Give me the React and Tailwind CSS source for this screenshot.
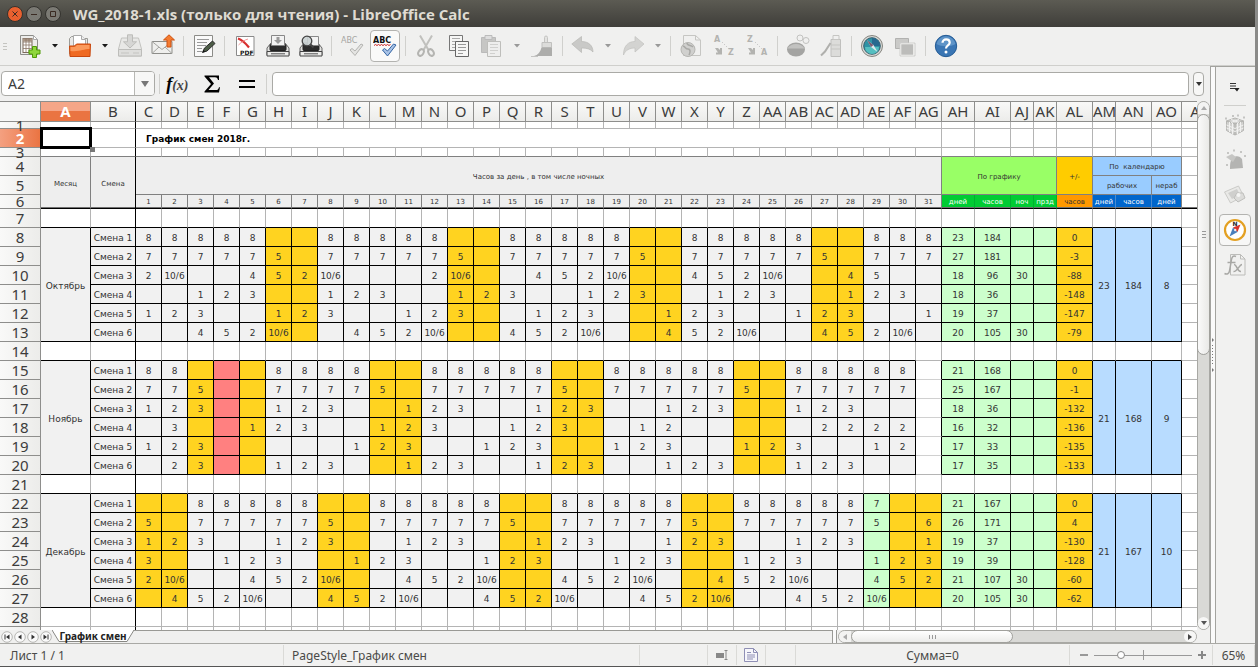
import React from 'react';
import clsx from 'clsx';

const LETTERS = ['A', 'B', 'C', 'D', 'E', 'F', 'G', 'H', 'I', 'J', 'K', 'L', 'M', 'N', 'O', 'P', 'Q', 'R', 'S', 'T', 'U', 'V', 'W', 'X', 'Y', 'Z'];
const COLUMNS = [...LETTERS, ...LETTERS.slice(0, 16).map((l) => `A${l}`)];
const DAYS = Array.from({ length: 31 }, (_, i) => i + 1);

// one token per day, "." is an empty cell
const MONTHS = [
  {
    name: 'Октябрь',
    firstRow: 8,
    days: 31,
    weekend: [6, 7, 13, 14, 20, 21, 27, 28],
    rows: [
      '8 8 8 8 8 . . 8 8 8 8 8 . . 8 8 8 8 8 . . 8 8 8 8 8 . . 8 8 8',
      '7 7 7 7 7 5 . 7 7 7 7 7 5 . 7 7 7 7 7 5 . 7 7 7 7 7 5 . 7 7 7',
      '2 10/6 . . 4 5 2 10/6 . . . 2 10/6 . . 4 5 2 10/6 . . 4 5 2 10/6 . . 4 5 . .',
      '. . 1 2 3 . . 1 2 3 . . 1 2 3 . . 1 2 3 . . 1 2 3 . . 1 2 3 .',
      '1 2 3 . . 1 2 3 . . 1 2 3 . . 1 2 3 . . 1 2 3 . . 1 2 3 . . 1',
      '. . 4 5 2 10/6 . . 4 5 2 10/6 . . 4 5 2 10/6 . . 4 5 2 10/6 . . 4 5 2 10/6 .',
    ],
    stats: [
      [23, 184, '', '', 0],
      [27, 181, '', '', -3],
      [18, 96, 30, '', -88],
      [18, 36, '', '', -148],
      [19, 37, '', '', -147],
      [20, 105, 30, '', -79],
    ],
    totals: [23, 184, 8],
  },
  {
    name: 'Ноябрь',
    firstRow: 15,
    days: 30,
    weekend: [3, 5, 10, 11, 17, 18, 24, 25],
    holiday: 4,
    rows: [
      '8 8 . . . 8 8 8 8 . . 8 8 8 8 8 . . 8 8 8 8 8 . . 8 8 8 8 8',
      '7 7 5 . . 7 7 7 7 5 . 7 7 7 7 7 5 . 7 7 7 7 7 5 . 7 7 7 7 7',
      '1 2 3 . . 1 2 3 . . 1 2 3 . . 1 2 3 . . 1 2 3 . . 1 2 3 . .',
      '. 3 . . 1 2 3 . . 1 2 3 . . 1 2 3 . . 1 2 . . . . . 2 2 2 2',
      '1 2 3 . . . . . 1 2 3 . . 1 2 3 . . 1 2 3 . . 1 2 3 . . 1 2',
      '. 2 3 . . 1 2 3 . . 1 2 3 . . 1 2 3 . . 1 2 3 . . 1 2 3 . .',
    ],
    stats: [
      [21, 168, '', '', 0],
      [25, 167, '', '', -1],
      [18, 36, '', '', -132],
      [16, 32, '', '', -136],
      [17, 33, '', '', -135],
      [17, 35, '', '', -133],
    ],
    totals: [21, 168, 9],
  },
  {
    name: 'Декабрь',
    firstRow: 22,
    days: 31,
    weekend: [1, 2, 8, 9, 15, 16, 22, 23, 30, 31],
    shortDay: 29,
    rows: [
      '. . 8 8 8 8 8 . . 8 8 8 8 8 . . 8 8 8 8 8 . . 8 8 8 8 8 7 . .',
      '5 . 7 7 7 7 7 5 . 7 7 7 7 7 5 . 7 7 7 7 7 5 . 7 7 7 7 7 5 . 6',
      '1 2 3 . . 1 2 3 . . 1 2 3 . . 1 2 3 . . 1 2 3 . . 1 2 3 . . 1',
      '3 . . 1 2 3 . . 1 2 3 . . 1 2 3 . . 1 2 3 . . 1 2 3 . . 1 2 3',
      '2 10/6 . . 4 5 2 10/6 . . 4 5 2 10/6 . . 4 5 2 10/6 . . 4 5 2 10/6 . . 4 5 2',
      '. 4 5 2 10/6 . . 4 5 2 10/6 . . 4 5 2 10/6 . . 4 5 2 10/6 . . 4 5 2 10/6 . .',
    ],
    stats: [
      [21, 167, '', '', 0],
      [26, 171, '', '', 4],
      [19, 37, '', '', -130],
      [19, 39, '', '', -128],
      [21, 107, 30, '', -60],
      [20, 105, 30, '', -62],
    ],
    totals: [21, 167, 10],
  },
];

const RowHead = ({ n, h = 'h-[19px]', leading = 'leading-[18px]', active }) => (
  <th
    scope="row"
    className={clsx(
      'border-r border-b border-[#8e8e8c] p-0 text-center text-[15px]',
      h,
      leading,
      active ? 'bg-linear-to-r from-[#f4a080] to-[#ea7442] font-bold text-white' : 'bg-linear-to-r from-[#f9f9f8] to-[#ececea] font-normal text-[#3c3c3c]'
    )}
  >
    {n}
  </th>
);

const Blank = ({ dark, right, black, h }) => (
  <td
    className={clsx(
      'border-r border-b bg-white p-0',
      h,
      right ? 'border-r-black' : 'border-r-[#b4b4b4]',
      black ? 'border-b-black' : dark ? 'border-b-[#808080]' : 'border-b-[#b4b4b4]'
    )}
  />
);

// plain row with nothing but grid lines, blackUnder tells which columns get a frame below
const EmptyRow = ({ n, h, leading, dark, blackUnder = () => false }) => (
  <tr>
    <RowHead n={n} h={h} leading={leading} />
    {COLUMNS.map((c) => (
      <Blank key={c} dark={dark && c !== 'AP'} right={c === 'B'} black={blackUnder(c)} />
    ))}
  </tr>
);

const HeadCell = ({ className, children, ...rest }) => (
  <td className={clsx('border-r border-b border-[#808080] px-0 pb-0 text-center text-[7px] leading-3', className)} {...rest}>
    {children}
  </td>
);

const dayColor = (month, day) => {
  if (month.weekend.includes(day)) return 'bg-[#ffd320]';
  if (month.holiday === day) return 'bg-[#ff8080]';
  if (month.shortDay === day) return 'bg-[#ccffcc]';
  return 'bg-[#f1f1f1]';
};

const cell = 'border-r border-b border-black px-0 pt-0.5 pb-0 text-center';

const MonthBlock = ({ month }) =>
  month.rows.map((row, i) => (
    <tr key={i}>
      <RowHead n={month.firstRow + i} />
      {i === 0 && (
        <td rowSpan={6} className={clsx(cell, 'bg-[#f1f1f1]')}>
          {month.name}
        </td>
      )}
      <td className={clsx(cell, 'bg-[#f1f1f1] whitespace-nowrap')}>Смена {i + 1}</td>
      {row.split(' ').map((v, d) => (
        <td key={d} className={clsx(cell, dayColor(month, d + 1))}>
          {v === '.' ? '' : v}
        </td>
      ))}
      {month.days === 30 && (
        <td className={clsx('border-r border-b border-r-black bg-white p-0', i === 5 ? 'border-b-[#b4b4b4]' : 'border-b-[#d0d0d0]')} />
      )}
      {month.stats[i].map((v, s) => (
        <td key={s} className={clsx(cell, s === 4 ? 'bg-[#ffd320]' : 'bg-[#ccffcc]')}>
          {v}
        </td>
      ))}
      {i === 0 &&
        month.totals.map((v, t) => (
          <td key={t} rowSpan={6} className={clsx(cell, 'bg-[#b8dcff]')}>
            {v}
          </td>
        ))}
      <Blank />
    </tr>
  ));

const lastHead = 'border-b-black shadow-[inset_0_-1px_0_#707070]';

const Sheet = () => (
  <table className="w-[1218px] table-fixed border-separate border-spacing-0 font-['DejaVu_Sans',sans-serif] text-[9px] leading-3 text-[#333]">
    <colgroup>
      <col className="w-[41px]" />
      <col className="w-[50px]" />
      <col className="w-[45px]" />
      {DAYS.map((d) => (
        <col key={d} className="w-[26px]" />
      ))}
      <col className="w-[33px]" />
      <col className="w-[36px]" />
      <col className="w-[23px]" />
      <col className="w-[23px]" />
      <col className="w-[36px]" />
      <col className="w-[23px]" />
      <col className="w-[36px]" />
      <col className="w-[30px]" />
      <col className="w-[36px]" />
    </colgroup>
    <thead className="font-['Noto_Sans','Open_Sans',sans-serif]">
      <tr>
        <th className="h-[21px] border-t border-r border-b border-[#8e8e8c] bg-[#f6f6f5] p-0" />
        {COLUMNS.map((c) => (
          <th
            key={c}
            scope="col"
            className={clsx(
              'overflow-hidden border-t border-r border-b border-[#8e8e8c] p-0 text-center text-[15px] leading-[19px] whitespace-nowrap',
              c === 'A' ? 'bg-linear-to-b from-[#f5a688] from-50% to-[#ea7442] to-50% font-bold text-white' : 'bg-linear-to-b from-[#f9f9f8] to-[#ececea] font-normal text-[#3c3c3c]',
              c === 'B' && 'border-r-black'
            )}
          >
            {c}
          </th>
        ))}
      </tr>
    </thead>
    <tbody className="[&_th]:font-['Noto_Sans','Open_Sans',sans-serif]">
      <EmptyRow n={1} h="h-[7px]" leading="leading-[6px]" />
      <tr>
        <RowHead n={2} active />
        <td className="relative border-r border-b border-[#b4b4b4] p-0">
          <div className="absolute -top-[2px] -right-[2px] -bottom-[2px] -left-px border-[3px] border-black" />
          <div className="absolute -right-[5px] -bottom-[5px] size-[5px] bg-[#777]" />
        </td>
        <Blank right />
        <td colSpan={31} className="border-r border-b border-[#b4b4b4] pt-0.5 pr-0 pb-0 pl-2.5 font-bold text-black">
          График смен 2018г.
        </td>
        {COLUMNS.slice(33).map((c) => (
          <Blank key={c} />
        ))}
      </tr>
      <EmptyRow n={3} h="h-[9px]" leading="leading-[8px]" dark />
      <tr>
        <RowHead n={4} />
        <HeadCell rowSpan={3} className={clsx('bg-[#eee] pt-0.5', lastHead)}>Месяц</HeadCell>
        <HeadCell rowSpan={3} className={clsx('border-r-black bg-[#eee] pt-0.5', lastHead)}>Смена</HeadCell>
        <HeadCell colSpan={31} rowSpan={2} className="bg-[#eee] pt-0.5">Часов за день , в том числе ночных</HeadCell>
        <HeadCell colSpan={4} rowSpan={2} className="bg-[#99ff66] pt-0.5">По графику</HeadCell>
        <HeadCell rowSpan={2} className="bg-[#ffcc00] pt-0.5">+/-</HeadCell>
        <HeadCell colSpan={3} className="bg-[#99ccff] pt-0.5 whitespace-pre">{'По  календарю'}</HeadCell>
        <Blank />
      </tr>
      <tr>
        <RowHead n={5} />
        <HeadCell colSpan={2} className="bg-[#99ccff] pt-0.5">рабочих</HeadCell>
        <HeadCell className="bg-[#99ccff] pt-0.5">нераб</HeadCell>
        <Blank />
      </tr>
      <tr>
        <RowHead n={6} h="h-[14px]" leading="leading-[13px]" />
        {DAYS.map((d) => (
          <HeadCell key={d} className={clsx('bg-[#eee] pt-0', lastHead)}>
            {d}
          </HeadCell>
        ))}
        {['дней', 'часов', 'ноч', 'прзд'].map((t) => (
          <HeadCell key={t} className={clsx('border-r-[#00b030] bg-[#00cc33] pt-0 text-white', lastHead)}>{t}</HeadCell>
        ))}
        <HeadCell className={clsx('bg-[#ff9900] pt-0', lastHead)}>часов</HeadCell>
        <HeadCell className={clsx('border-r-[#4a8bd0] bg-[#0066cc] pt-0 text-white', lastHead)}>дней</HeadCell>
        <HeadCell className={clsx('border-r-[#4a8bd0] bg-[#0066cc] pt-0 text-white', lastHead)}>часов</HeadCell>
        <HeadCell className={clsx('bg-[#0066cc] pt-0 text-white', lastHead)}>дней</HeadCell>
        <td className={clsx('border-r border-b border-r-[#b4b4b4] bg-white p-0', lastHead)} />
      </tr>
      <EmptyRow n={7} blackUnder={(c) => c !== 'AP'} />
      <MonthBlock month={MONTHS[0]} />
      <EmptyRow n={14} blackUnder={(c) => c !== 'AP' && c !== 'AG'} />
      <MonthBlock month={MONTHS[1]} />
      <EmptyRow n={21} blackUnder={(c) => c !== 'AP'} />
      <MonthBlock month={MONTHS[2]} />
      <EmptyRow n={28} />
      <EmptyRow n="" />
    </tbody>
  </table>
);

const Icon = ({ children, size = 'size-6' }) => (
  <svg viewBox="0 0 24 24" className={clsx('shrink-0', size)} fill="none" aria-hidden="true">
    {children}
  </svg>
);

const ToolButton = ({ label, pressed, children }) => (
  <button
    type="button"
    aria-label={label}
    className={clsx('flex w-[33px] shrink-0 items-center justify-center', pressed && 'h-8')}
  >
    {pressed ? (
      <span className="flex h-8 w-[30px] items-center justify-center rounded border border-[#b3b3b0] bg-[#fafaf9]">{children}</span>
    ) : (
      children
    )}
  </button>
);

const Caret = ({ label, off }) => (
  <button type="button" aria-label={label} className="flex w-[17px] shrink-0 justify-center">
    <svg viewBox="0 0 6 4" className={clsx('h-1 w-1.5', off ? 'fill-[#999]' : 'fill-[#1a1a1a]')}>
      <path d="M0 0h6L3 3.6z" />
    </svg>
  </button>
);

const Sep = () => (
  <span className="flex w-2 shrink-0 justify-center">
    <span className="h-5 w-px bg-[#d0d0cd]" />
  </span>
);

const Printer = () => (
  <>
    <path d="M1 14 5 9h14l4 5v7H1z" fill="#e2e2e0" stroke="#666" />
    <rect x="4" y="10.500" width="16" height="6" rx="1" fill="#2c2c2c" stroke="#222" />
    <path d="M1 17.500h22V22H1z" fill="#ececea" stroke="#444" />
    <path d="M5 19.800h14" stroke="#555" />
  </>
);

const Toolbar = () => (
  <div className="flex h-[39px] shrink-0 items-center border-b border-[#cfcfcc] bg-[#f0f0ef]" role="toolbar" aria-label="Стандартная">
    <span className="flex w-[13px] shrink-0 flex-col items-start gap-[2px] pl-[3px]">
      <span className="h-px w-1 bg-[#c4c4c0]" />
      <span className="h-px w-1 bg-[#c4c4c0]" />
      <span className="h-px w-1 bg-[#c4c4c0]" />
    </span>
    <ToolButton label="Создать">
      <Icon>
        <path d="M2.500 1.500h13l4 4v15h-17z" fill="#ededeb" stroke="#8c8c88" />
        <path d="M15.500 1.500v4h4z" fill="#fff" stroke="#aaa" />
        <rect x="5" y="4.500" width="9" height="14" fill="#fff" stroke="#7b6a5c" />
        <path d="M5 4.500h9v3H5z" fill="#a89484" />
        <path d="M5 8h9M5 11h9M5 14.500h9M8 4.500v14M11 4.500v14" stroke="#8b7768" strokeWidth=".8" />
        <path d="M14.500 12.500h4v3.500h3.500v4h-3.500v3.500h-4V20H11v-4h3.500z" fill="#8fd63c" stroke="#4e9a06" />
      </Icon>
    </ToolButton>
    <Caret label="Шаблоны" />
    <ToolButton label="Открыть">
      <Icon>
        <path d="M1.500 20V4.500l2-2h5l1 2h10V20z" fill="#e9e9e7" stroke="#9a9a96" />
        <path d="M5.500 1.500h8l4 4V12h-12z" fill="#fff" stroke="#aaa" />
        <path d="M13.500 1.500v4h4" fill="#eee" stroke="#aaa" />
        <path d="M1.500 12h5l2-2h14l-.5 12.500h-20z" fill="#ef6a22" stroke="#c8480f" />
        <path d="M2.500 13h4.500l2-2h12.500v4c-6 0-10 3-19 2z" fill="#fb9a5c" />
      </Icon>
    </ToolButton>
    <Caret label="Последние файлы" />
    <ToolButton label="Сохранить">
      <Icon>
        <path d="m3.500 4-3 11v7h23v-7l-3-11z" fill="#e8e8e6" stroke="#c2c2bf" />
        <path d="M.5 15.500h23V22H.5z" fill="#dededc" stroke="#bdbdba" />
        <path d="M9.500.8h5v7h4L12 14 5.500 7.800h4z" fill="#d6d6d4" stroke="#bcbcb9" />
        <path d="M3 19h8M15 19h6" stroke="#c4c4c1" />
      </Icon>
    </ToolButton>
    <ToolButton label="Отправить документ">
      <Icon>
        <path d="M1 7.500h20v12H1z" fill="#efefed" stroke="#8d8d89" />
        <path d="m1 7.500 10 8 10-8M1 19.500l7-6.500M21 19.500 14 13" stroke="#a5a5a1" />
        <path d="M16 13V6h-3.500L18 .8 23.500 6H20v7z" fill="#f47b30" stroke="#ce5312" />
      </Icon>
    </ToolButton>
    <Sep />
    <ToolButton label="Правка">
      <Icon>
        <path d="M2.500 1.500h18v21h-18z" fill="#fafafa" stroke="#8c8c88" />
        <path d="M5 5.500h12M5 8.500h10M5 11.500h9M5 14.500h5M5 17.500h5" stroke="#999" />
        <path d="m10.500 18.500 2-4.500 8-7 2.500 2.500-8 7.500z" fill="#4c5c46" stroke="#2b2b2b" />
        <path d="m10.500 18.500 1-2.500 1.800 1.600z" fill="#111" />
      </Icon>
    </ToolButton>
    <Sep />
    <ToolButton label="Экспорт в PDF">
      <Icon>
        <path d="M3.500 2.500h17.500v19H3.500z" fill="#fff" stroke="#8a8a8a" />
        <path d="M5 4.500c3 1 7 4 11 9" stroke="#d83030" strokeWidth="2.200" />
        <path d="M5.500 11c3-3 6-5 9.500-6" stroke="#ef8080" strokeWidth=".8" />
        <text x="7" y="20.500" fontSize="6" fontWeight="bold" fill="#111" fontFamily="DejaVu Sans, sans-serif">PDF</text>
      </Icon>
    </ToolButton>
    <ToolButton label="Печать">
      <Icon>
        <Printer />
        <path d="M5.500 1.500h13v10h-13z" fill="#f3f3f3" stroke="#888" />
        <path d="M10.500 3h3v3h2.500L12 10 8 6h2.500z" fill="#9a9a9a" />
      </Icon>
    </ToolButton>
    <ToolButton label="Предварительный просмотр">
      <Icon>
        <Printer />
        <path d="M8.500 2.500h11v9h-11z" fill="#f3f3f3" stroke="#888" />
        <circle cx="8" cy="7" r="4.800" fill="#c9d0d2" fillOpacity=".9" stroke="#444" strokeWidth="1.300" />
        <path d="m11.500 10.500 3 3" stroke="#444" strokeWidth="2.200" />
      </Icon>
    </ToolButton>
    <Sep />
    <ToolButton label="Орфография">
      <Icon>
        <text x="1" y="9" fontSize="8" fill="#a5a5a2" fontFamily="DejaVu Sans, sans-serif">ABC</text>
        <path d="m10 16 2-1.500 3 2.500 6-7 2 1-8 10.500z" fill="#e4e4e2" stroke="#b3b3b0" />
      </Icon>
    </ToolButton>
    <ToolButton label="Автопроверка орфографии" pressed>
      <Icon>
        <text x="0" y="9" fontSize="8" fontWeight="bold" fill="#111" fontFamily="DejaVu Sans, sans-serif">ABC</text>
        <path d="m1 11.500 1.500-1 1.500 1 1.500-1 1.500 1 1.500-1 1.500 1 1.500-1 1.500 1 1.500-1 1.500 1 1.500-1" stroke="#c22" />
        <path d="m9.500 16 2-1.500 3 2.500 6-7 2.500 1-8.500 11z" fill="#a9c3e6" stroke="#3465a4" />
      </Icon>
    </ToolButton>
    <Sep />
    <ToolButton label="Вырезать">
      <Icon>
        <path d="M6 1.500 14.500 16M18 1.500 9.500 16" stroke="#c0c0bd" strokeWidth="2" />
        <ellipse cx="7" cy="18.500" rx="2.500" ry="3.500" transform="rotate(30 7 18.500)" stroke="#b4b4b1" strokeWidth="2" />
        <ellipse cx="17" cy="18.500" rx="2.500" ry="3.500" transform="rotate(-30 17 18.500)" stroke="#b4b4b1" strokeWidth="2" />
      </Icon>
    </ToolButton>
    <ToolButton label="Копировать">
      <Icon>
        <path d="M2.500 1.500h13v15h-13z" fill="#f6f6f5" stroke="#777" />
        <path d="M5 4.500h8M5 7.500h5M5 10.500h3M5 13.500h3" stroke="#aaa" />
        <path d="M8.500 7.500h13v15h-13z" fill="#f6f6f5" stroke="#666" />
        <path d="M11 10.500h8M11 13.500h8M11 16.500h8M11 19.500h5" stroke="#999" />
      </Icon>
    </ToolButton>
    <ToolButton label="Вставить">
      <Icon>
        <path d="M1.500 3.500h14v15h-14z" fill="#c6c6c4" stroke="#bababa" />
        <path d="M5 1.500h7v4H5z" fill="#dedede" stroke="#bbb" />
        <path d="M7.500 7.500h13v15h-13z" fill="#eeeeed" stroke="#bebebb" />
        <path d="M10 10.500h8M10 13.500h8M10 16.500h8M10 19.500h5" stroke="#d0d0ce" />
      </Icon>
    </ToolButton>
    <Caret label="Варианты вставки" off />
    <ToolButton label="Копировать форматирование">
      <Icon>
        <path d="M14.500 8V3.500a1.500 1.500 0 0 1 3 0V8" fill="#e3e3e1" stroke="#c4c4c2" />
        <path d="M12 8.500h9.500v5H12z" fill="#dcdcda" stroke="#c0c0be" />
        <path d="M11.500 13.500h10.500V22H4c4-1 6.500-4 7.500-8.500z" fill="#adadab" />
        <path d="M1 22.500h7" stroke="#c4c4c2" />
      </Icon>
    </ToolButton>
    <Sep />
    <ToolButton label="Отменить">
      <Icon>
        <path d="M10.500 2.500v5c7 0 11.500 4 11.500 10.500-2.500-3-6-4-11.500-4v4.500L.8 10z" fill="#c9c9c7" stroke="#b8b8b5" strokeWidth=".7" />
      </Icon>
    </ToolButton>
    <Caret label="Список отмены" off />
    <ToolButton label="Вернуть">
      <Icon>
        <path d="M14 2.500v5C7 7.500 2.500 12 2.500 21c2-5 6-7 11.500-7v4l9-8z" fill="#d3d3d1" stroke="#c2c2bf" strokeWidth=".7" />
      </Icon>
    </ToolButton>
    <Caret label="Список возврата" off />
    <Sep />
    <ToolButton label="Гиперссылка">
      <Icon>
        <path d="M4.500 1.500h12l5 4.500v15.500h-17z" fill="#f0f0ef" stroke="#c6c6c3" />
        <path d="M16.500 1.500V6h5" stroke="#c6c6c3" />
        <circle cx="9" cy="15.500" r="7" fill="#d0d0ce" stroke="#b5b5b2" />
        <path d="M4 12c3 1 2 3 5 3s2 4 1 6M8 9c0 3 4 2 6 4" stroke="#a9a9a6" strokeWidth="1.500" />
      </Icon>
    </ToolButton>
    <ToolButton label="Сортировать по возрастанию">
      <Icon>
        <text x="2" y="8" fontSize="8" fontWeight="bold" fill="#b3b3b0" fontFamily="DejaVu Sans, sans-serif">A</text>
        <text x="16" y="21" fontSize="8" fontWeight="bold" fill="#b3b3b0" fontFamily="DejaVu Sans, sans-serif">Z</text>
        <path d="m10 8 7 7" stroke="#bbb" strokeDasharray="1 2" />
        <path d="M3 14h3l2 2v-2h2v6.500H4v-2h2z" fill="#b3b3b0" />
      </Icon>
    </ToolButton>
    <ToolButton label="Сортировать по убыванию">
      <Icon>
        <text x="2" y="8" fontSize="8" fontWeight="bold" fill="#b3b3b0" fontFamily="DejaVu Sans, sans-serif">Z</text>
        <text x="16" y="21" fontSize="8" fontWeight="bold" fill="#b3b3b0" fontFamily="DejaVu Sans, sans-serif">A</text>
        <path d="m10 8 7 7" stroke="#bbb" strokeDasharray="1 2" />
        <path d="M3 14h3l2 2v-2h2v6.500H4v-2h2z" fill="#b3b3b0" />
      </Icon>
    </ToolButton>
    <Sep />
    <ToolButton label="Диаграмма">
      <Icon>
        <ellipse cx="10" cy="15.500" rx="9" ry="7" fill="#a4a4a2" />
        <path d="M1.500 14.500c3-6 14-6 17 0" fill="#c2c2c0" />
        <circle cx="14" cy="4" r="3" fill="#f0f0ef" stroke="#c2c2c0" />
        <circle cx="20" cy="6.500" r="3" fill="#f0f0ef" stroke="#c2c2c0" />
      </Icon>
    </ToolButton>
    <ToolButton label="Функции рисования">
      <Icon>
        <path d="M12 5.500h9.500v17H12z" fill="#dcdcda" stroke="#bfbfbd" />
        <path d="M14 1.500h6v4h-6zM12 11h9.500M12 15h9.500" stroke="#c6c6c3" />
        <path d="m2 21.500 4-4L11.500 9" stroke="#b0b0ad" strokeWidth="2" />
      </Icon>
    </ToolButton>
    <Sep />
    <ToolButton label="Навигатор">
      <Icon>
        <circle cx="12" cy="12" r="10.500" fill="#d9d9d7" stroke="#85857f" />
        <circle cx="12" cy="12" r="8.300" fill="#2f93a6" stroke="#39606e" />
        <path d="M12 4a8 8 0 0 1 8 8h-8z" fill="#28698f" />
        <path d="M5 13h14a7 7 0 0 1-14 0z" fill="#55bfc0" />
        <path d="m7 6 6.500 5 4 7-6.500-5z" fill="#dfe9ec" />
        <path d="m7 6 6.500 5-2.500 2z" fill="#7b5a70" />
      </Icon>
    </ToolButton>
    <ToolButton label="Окна">
      <Icon>
        <path d="M2.500 4.500h13v10h-13z" fill="#cacac8" stroke="#b2b2b0" />
        <path d="M7.500 9.500h13.500v12H7.500z" fill="#bcbcba" stroke="#f7f7f6" strokeWidth="1.500" />
        <path d="M7 9h15v13H7z" stroke="#b5b5b3" strokeWidth=".6" />
      </Icon>
    </ToolButton>
    <Sep />
    <ToolButton label="Справка">
      <Icon>
        <circle cx="12" cy="12" r="10.700" fill="#3a76b4" stroke="#245b94" />
        <path d="M2.500 10a9.700 9.700 0 0 1 19 0c-5 3-14 3-19 0z" fill="#5e94c8" />
        <path d="M8.500 8.800c0-4.500 7.200-4.500 7.200 0 0 2.700-3.700 2.600-3.700 5.700" stroke="#fff" strokeWidth="2.200" />
        <circle cx="12" cy="18" r="1.500" fill="#fff" />
      </Icon>
    </ToolButton>
  </div>
);

const FormulaBar = () => (
  <div className="flex h-[35px] shrink-0 items-center bg-[#f0f0ef] pr-1.5 pl-px">
    <div className="flex h-[25px] w-[154px] shrink-0 overflow-hidden rounded border border-[#aaaaa6] bg-white">
      <input aria-label="Поле имени" defaultValue="A2" className="min-w-0 flex-1 px-1.5 text-sm text-[#3c3c3c] outline-none" />
      <button type="button" aria-label="Список имён" className="flex w-5 items-center justify-center border-l border-[#b8b8b4] bg-[#f7f7f6]">
        <svg viewBox="0 0 8 6" className="h-1.5 w-2 fill-[#777]">
          <path d="M0 0h8L4 6z" />
        </svg>
      </button>
    </div>
    <span className="ml-1 h-5 w-px shrink-0 bg-[#d0d0cd]" />
    <div className="flex w-[106px] shrink-0 items-center justify-around pr-0.5 text-black">
      <button type="button" aria-label="Мастер функций" className="w-[33px] font-['Liberation_Serif',serif] text-lg leading-6 font-bold italic">
        f<span className="text-sm text-[#444]">(x)</span>
      </button>
      <button type="button" aria-label="Сумма" className="flex w-[33px] justify-center">
        <svg viewBox="0 0 16 18" className="h-[18px] w-4" fill="#000">
          <path d="M.5.500h14.500v4.500h-1C13.500 3 12.500 2.300 11 2.300H5L10 8.500 4.500 15H12c1.500 0 2.500-.8 3-2.800h1L15 17.500H.5v-1L7 9 .5 1.500z" />
        </svg>
      </button>
      <button type="button" aria-label="Формула" className="flex w-[33px] flex-col items-center gap-1">
        <span className="h-[2px] w-4 bg-black" />
        <span className="h-[2px] w-4 bg-black" />
      </button>
    </div>
    <span className="h-5 w-px shrink-0 bg-[#d0d0cd]" />
    <input aria-label="Строка ввода" className="ml-[5px] h-6 min-w-0 flex-1 rounded border border-[#aaaaa6] bg-white px-2 text-sm outline-none" />
    <button type="button" aria-label="Развернуть строку формул" className="ml-1 flex h-6 w-[11px] items-center justify-center rounded border border-[#aaaaa6] bg-[#f7f7f6]">
      <svg viewBox="0 0 6 4" className="h-1 w-1.5 shrink-0 fill-[#333]">
        <path d="M0 0h6L3 4z" />
      </svg>
    </button>
  </div>
);

const VScroll = () => (
  <div className="flex w-[13px] shrink-0 flex-col rounded-full border border-[#a8a8a4] bg-[#d9d9d6]">
    <button type="button" aria-label="Вверх" className="flex h-3 shrink-0 items-center justify-center rounded-t-full bg-[#f3f3f2]">
      <svg viewBox="0 0 6 4" className="h-1 w-1.5 fill-[#aaa]"><path d="M0 4h6L3 0z" /></svg>
    </button>
    <div className="-mx-px flex h-[241px] shrink-0 flex-col items-center justify-center gap-[2px] rounded-full border border-[#a0a09c] bg-linear-to-r from-[#fafafa] to-[#e9e9e7]">
      <span className="h-px w-1 bg-[#999]" />
      <span className="h-px w-1 bg-[#999]" />
      <span className="h-px w-1 bg-[#999]" />
    </div>
    <div className="flex-1" />
    <button type="button" aria-label="Вниз" className="flex h-3 shrink-0 items-center justify-center rounded-full bg-[#f7f7f6]">
      <svg viewBox="0 0 6 4" className="h-1 w-1.5 fill-[#555]"><path d="M0 0h6L3 4z" /></svg>
    </button>
  </div>
);

const NavButton = ({ label, children }) => (
  <button type="button" aria-label={label} className="flex w-[13px] shrink-0 items-center justify-center">
    <svg viewBox="0 0 12 12" className="size-3" fill="#333">
      <circle cx="6" cy="6" r="5.300" fill="#fafafa" stroke="#a5a5a1" strokeWidth=".8" />
      {children}
    </svg>
  </button>
);

const TabBar = () => (
  <div className="flex h-[13px] shrink-0 bg-[#f0f0ef]">
    <NavButton label="Первый лист"><path d="M3.500 3.500h1v5h-1zM8.500 3.500v5L5 6z" /></NavButton>
    <NavButton label="Предыдущий лист"><path d="M7.500 3.500v5L4 6z" /></NavButton>
    <NavButton label="Следующий лист"><path d="M4.500 3.500v5L8 6z" /></NavButton>
    <NavButton label="Последний лист"><path d="M3.500 3.500v5L7 6zM7.500 3.500h1v5h-1z" /></NavButton>
    <div className="flex min-w-0 flex-1 border-t border-r border-[#999995]">
      <button type="button" className="relative -mt-px flex h-3 w-[82px] items-center justify-center text-[10px] leading-3 font-bold whitespace-nowrap text-[#222]">
        <svg viewBox="0 0 82 12" className="absolute inset-0 size-full" fill="#fff">
          <path d="M0 0h82l-7 11.500H7z" />
          <path d="m0 0 7 11.500h68L82 0" fill="none" stroke="#888884" />
        </svg>
        <span className="relative">График смен</span>
      </button>
    </div>
    <span className="w-1 shrink-0 border-r border-[#999995] bg-[#fafafa]" />
    <div className="mx-px flex w-[359px] shrink-0 rounded-full border border-[#a8a8a4] bg-[#d9d9d6]">
      <button type="button" aria-label="Влево" className="flex w-3 items-center justify-center rounded-l-full bg-[#f3f3f2]">
        <svg viewBox="0 0 4 6" className="h-1.5 w-1 fill-[#aaa]"><path d="M4 0v6L0 3z" /></svg>
      </button>
      <div className="-my-px flex w-[162px] items-center justify-center gap-[2px] rounded-full border border-[#a0a09c] bg-linear-to-b from-white to-[#ececea]">
        <span className="h-1 w-px bg-[#999]" />
        <span className="h-1 w-px bg-[#999]" />
        <span className="h-1 w-px bg-[#999]" />
      </div>
      <div className="flex-1" />
      <button type="button" aria-label="Вправо" className="flex w-3 items-center justify-center rounded-full bg-[#f7f7f6]">
        <svg viewBox="0 0 4 6" className="h-1.5 w-1 fill-[#444]"><path d="M0 0v6L4 3z" /></svg>
      </button>
    </div>
    <span className="w-3 shrink-0" />
  </div>
);

const SideButton = ({ label, active, children }) => (
  <button
    type="button"
    aria-label={label}
    className={clsx('flex size-8 items-center justify-center rounded', active && 'border border-[#b3b3b0] bg-[#f7f7f6]')}
  >
    <Icon>{children}</Icon>
  </button>
);

const Sidebar = () => (
  <aside className="flex w-10 shrink-0 flex-col items-center border-t border-l border-[#a3a39f] bg-[#f1f1f0] pr-0.5">
    <button type="button" aria-label="Параметры боковой панели" className="mt-2.5 flex size-5 items-center justify-center">
      <svg viewBox="0 0 10 10" className="size-2.5" fill="none">
        <path d="M0 1.500h6M0 4h6M0 6.500h5" stroke="#333" />
        <path d="M4 6h5.500L7 9.500z" fill="#222" />
      </svg>
    </button>
    <span className="mt-2 h-px w-[22px] shrink-0 bg-[#cfcfcc]" />
    <div className="mt-[3px] flex flex-col gap-[3px]">
      <SideButton label="Свойства">
        <path d="M3.500 8 12 5l8.500 3-8.500 3zM3.500 8v9.500L12 22V11zM20.500 8v9.500L12 22V11z" fill="#d2d2d0" stroke="#b5b5b2" />
        <path d="M6.500 9v10M9.500 10v11M14.500 10v11M17.500 9v10M3.500 12l8.500 3.500 8.500-3.500M3.500 15l8.500 3.500 8.500-3.500M8 6.500l8 3M16 6.500l-8 3" stroke="#f1f1f0" />
        <path d="M9 2h2v2H9zM14 1.500h2v2h-2zM2 4.500h2v2H2zM20 3.500h2v2h-2z" fill="#c4c4c2" />
      </SideButton>
      <SideButton label="Стили">
        <path d="M7 21c0-5 0-8 3-11s7-2 9 1l1 9z" fill="#b4b4b2" />
        <path d="m3 9 6-3 4 3-3 5z" fill="#c6c6c4" />
        <path d="M4 4h2v2H4zM10 1.500h2v2h-2zM17 3h2v2h-2zM21 7h2v2h-2zM3 16h2v2H3z" fill="#c6c6c4" />
      </SideButton>
      <SideButton label="Галерея">
        <path d="m1.500 9 14-6 5 10-13 7z" fill="#e9e9e7" stroke="#cbcbc8" />
        <path d="m5 10 9-4 3 6-8 4z" fill="#cfcfcd" />
        <path d="M14 10h6l2 5-7 4-4-4z" fill="#dcdcda" stroke="#bfbfbc" />
        <circle cx="15.500" cy="12" r="2" fill="#f4f4f3" />
      </SideButton>
      <SideButton label="Навигатор" active>
        <circle cx="12" cy="12" r="10" fill="#fff" stroke="#e3a021" strokeWidth="2.200" />
        <text x="9.500" y="7.500" fontSize="6" fontWeight="bold" fill="#222" fontFamily="DejaVu Sans, sans-serif">N</text>
        <path d="m17.500 6.500-3 7.500-4.500-4.500z" fill="#d8332a" />
        <path d="m6.500 18.500 3.500-9 4.500 4.500z" fill="#4a7ebb" />
        <circle cx="12.200" cy="12" r="1.200" fill="#eee" />
      </SideButton>
      <SideButton label="Функции">
        <path d="M7.500 1.500h10l4.500 4.500v16h-14.500z" fill="#f1f1f0" stroke="#bcbcb9" />
        <path d="M17.500 1.500V6H22" stroke="#bcbcb9" />
        <path d="M13 3.500c-2.500-1.500-4 0-4.500 3L6.500 18c-.5 2.800-2.500 3.800-5 2.500M4.500 9.500h8" stroke="#a8a8a5" strokeWidth="1.500" />
        <path d="M11 11.500c3-.5 3 7.500 7 7M19 11.500c-2.500 0-5 7.500-8.500 7" stroke="#a8a8a5" strokeWidth="1.500" />
      </SideButton>
    </div>
  </aside>
);

const StatusBar = () => (
  <footer className="flex h-[23px] shrink-0 items-stretch border-t border-[#a9a9a5] bg-[#f1f1f0] text-xs leading-[22px] text-[#4a4a48] [&>*]:my-px [&>*]:border-r [&>*]:border-[#dadad7]">
    <div className="w-[284px] shrink-0 pl-2.5">Лист 1 / 1</div>
    <div className="w-[356px] shrink-0 pl-2">PageStyle_График смен</div>
    <div className="w-[68px] shrink-0" />
    <div className="flex w-[29px] shrink-0 items-center justify-center">
      <svg viewBox="0 0 14 12" className="h-3 w-3.5" fill="none">
        <path d="M1 4h8v5H1z" fill="#888" />
        <path d="M9.500 1.500h3M11 1.500v9M9.500 10.500h3" stroke="#888" />
      </svg>
    </div>
    <div className="flex w-[29px] shrink-0 items-center justify-center">
      <svg viewBox="0 0 14 14" className="size-3.5" fill="none">
        <path d="M.5.500h9l4 4v9H.5z" fill="#f6f6fb" stroke="#8f8fb5" />
        <path d="M9.500.500v4h4M3 4.500h4M3 7h8M3 9h8M3 11h6" stroke="#8f8fb5" />
      </svg>
    </div>
    <div className="w-[30px] shrink-0" />
    <div className="min-w-0 flex-1 text-center">Сумма=0</div>
    <div className="flex w-[143px] shrink-0 items-center justify-center gap-1.5 pl-1">
      <button type="button" aria-label="Уменьшить масштаб" className="flex h-4 w-2 items-center">
        <span className="h-[2px] w-2 bg-[#999]" />
      </button>
      <div className="relative flex w-[98px] items-center">
        <span className="absolute left-1/2 h-2.5 w-px bg-[#999]" />
        <input
          type="range"
          aria-label="Масштаб"
          defaultValue={26}
          className="h-px w-full appearance-none bg-[#999] [&::-webkit-slider-thumb]:size-2 [&::-webkit-slider-thumb]:appearance-none [&::-webkit-slider-thumb]:rounded-full [&::-webkit-slider-thumb]:border [&::-webkit-slider-thumb]:border-[#888] [&::-webkit-slider-thumb]:bg-white"
        />
      </div>
      <button type="button" aria-label="Увеличить масштаб" className="relative flex h-4 w-2 items-center justify-center">
        <span className="h-[2px] w-2 bg-[#888]" />
        <span className="absolute h-2 w-[2px] bg-[#888]" />
      </button>
    </div>
    <div className="w-[42px] shrink-0 text-center">65%</div>
  </footer>
);

const WindowButton = ({ label, close, children }) => (
  <button
    type="button"
    aria-label={label}
    className={clsx('flex size-4 items-center justify-center rounded-full border border-[#33322e]', close ? 'bg-[#e9602f]' : 'bg-[#7b7a74]')}
  >
    <svg viewBox="0 0 8 8" className="size-2" fill="none" stroke="#3a2a22">
      {children}
    </svg>
  </button>
);

const App = () => (
  <div className="flex h-screen flex-col border-r-[3px] border-b border-r-[#8b8b89] border-b-[#555] bg-[#f0f0ef] font-['Noto_Sans','Open_Sans',sans-serif]">
    <header className="flex h-[27px] shrink-0 items-center bg-linear-to-b from-[#5c5b53] to-[#3f3e3a] pl-[7px]">
      <div className="flex gap-[3px]">
        <WindowButton label="Закрыть" close><path d="m1.500 1.500 5 5M6.500 1.500l-5 5" /></WindowButton>
        <WindowButton label="Свернуть"><path d="M1 4.500h6" /></WindowButton>
        <WindowButton label="Развернуть"><path d="M1.500 1.500h5v5h-5z" /></WindowButton>
      </div>
      <h1 className="ml-3 truncate font-['Open_Sans',sans-serif] text-[15px] leading-5 font-bold text-[#dfdbd2]">WG_2018-1.xls (только для чтения) - LibreOffice Calc</h1>
    </header>
    <Toolbar />
    <main className="flex min-h-0 flex-1">
      <div className="flex min-w-0 flex-1 flex-col">
        <FormulaBar />
        <div className="flex min-h-0 flex-1">
          <div className="min-w-0 flex-1 overflow-hidden bg-white">
            <Sheet />
          </div>
          <VScroll />
        </div>
        <TabBar />
      </div>
      <div className="flex w-[5px] shrink-0 flex-col items-center justify-center border-t border-l border-[#a3a39f] bg-[#fafafa]">
        <svg viewBox="0 0 4 34" className="h-[34px] w-1" fill="#777">
          <path d="M1 0v4l2-2zM1 30v4l2-2z" />
          <path d="M1.500 7v20" stroke="#777" strokeDasharray="1 2" />
        </svg>
      </div>
      <Sidebar />
    </main>
    <StatusBar />
  </div>
);

export default App;
